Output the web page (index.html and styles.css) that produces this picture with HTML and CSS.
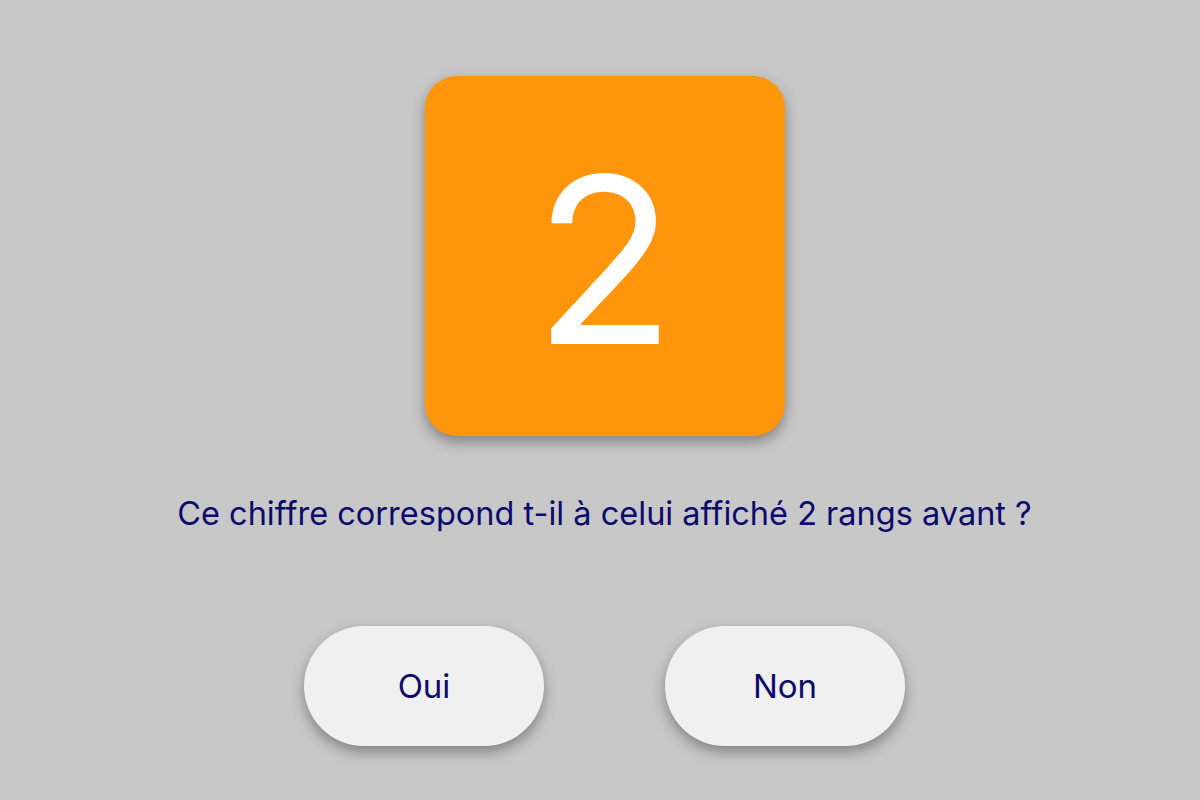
FILE: index.html
```html
<!DOCTYPE html>
<html lang="fr">
<head>
    <meta charset="UTF-8">
    <meta name="viewport" content="width=device-width, initial-scale=1.0">
    <title>N-back</title>
    <link rel="stylesheet" href="styles.css">
</head>
<body>
    <div class="game">
        <div class="digit-card" id="digit">2</div>

        <p class="question">Ce chiffre correspond t-il à celui affiché 2 rangs avant ?</p>

        <div class="answers">
            <button class="answer">Oui</button>
            <button class="answer">Non</button>
        </div>
    </div>
</body>
</html>
```

FILE: styles.css
```css
body {
    font-family: Inter, "Noto Sans", sans-serif;
    background-color: #c8c8c8;
    margin: 0;
    height: 100vh;
}

.game {
    display: flex;
    flex-direction: column;
    align-items: center;
    padding-top: 76px;
    padding-left: 9px;
}

.digit-card {
    width: 360px;
    height: 360px;
    background-color: #ff950a;
    border-radius: 32px;
    box-shadow: 0px 6px 14px rgba(0, 0, 0, 0.35);
    color: white;
    font-size: 232px;
    font-weight: 400;
    display: flex;
    justify-content: center;
    align-items: center;
    line-height: 1;
    padding-top: 8px;
    box-sizing: border-box;
}

.question {
    color: #0b0b6e;
    font-size: 32.5px;
    margin: 58px 0 0 0;
    line-height: 40px;
}

.answers {
    display: flex;
    gap: 121px;
    margin-top: 92px;
}

.answer {
    width: 240px;
    height: 120px;
    border: none;
    border-radius: 60px;
    background-color: #f0f0f0;
    color: #0b0b6e;
    font-family: inherit;
    font-size: 33px;
    box-shadow: 0px 6px 14px rgba(0, 0, 0, 0.35);
    cursor: pointer;
}
```
